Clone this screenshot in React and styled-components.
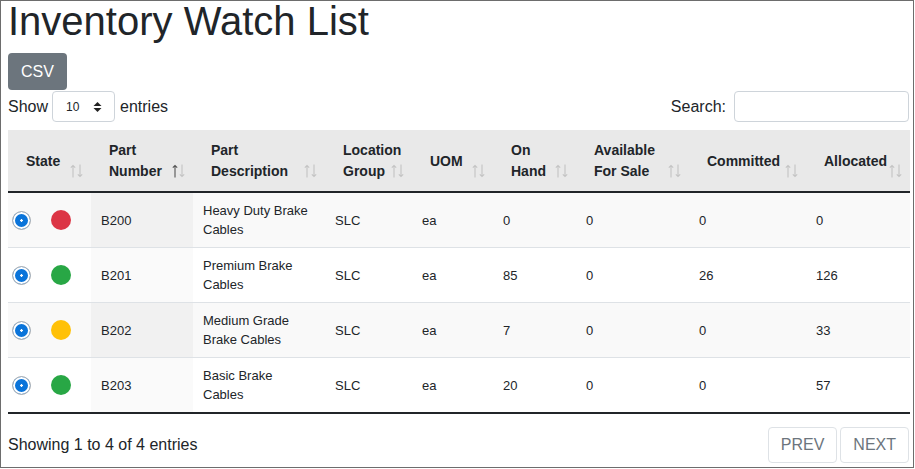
import React from "react";
import styled, { createGlobalStyle } from "styled-components";

const Global = createGlobalStyle`
  html, body { margin: 0; padding: 0; background: #fff; }
  body { font-family: "Liberation Sans", Arial, sans-serif; color: #212529; }
  * { box-sizing: border-box; }
`;

const Frame = styled.div`
  width: 914px;
  height: 468px;
  border: 1px solid #6d6d6d;
  padding: 0 3px 0 7px;
  display: flex;
  flex-direction: column;
`;

const Title = styled.h1`
  margin: 0;
  font-size: 40px;
  line-height: 40px;
  font-weight: 400;
  color: #212529;
`;

const CsvButton = styled.button`
  align-self: flex-start;
  margin-top: 12px;
  height: 37px;
  padding: 0 13px;
  border: none;
  border-radius: 4px;
  background: #6c757d;
  color: #fff;
  font-family: inherit;
  font-size: 16px;
`;

const Controls = styled.div`
  margin-top: 1px;
  display: flex;
  justify-content: space-between;
  align-items: center;
  height: 31px;
  font-size: 16px;
`;

const Group = styled.label`
  display: flex;
  align-items: center;
  gap: ${(p) => p.$gap || 4}px;
`;

const SelectBox = styled.div`
  width: 63px;
  height: 31px;
  border: 1px solid #ced4da;
  border-radius: 4px;
  display: flex;
  align-items: center;
  justify-content: space-between;
  padding: 0 12px 0 13px;
  font-size: 12px;
  margin-right: 1px;
`;

const SearchInput = styled.input`
  width: 175px;
  height: 31px;
  border: 1px solid #ced4da;
  border-radius: 4px;
  margin-right: 1px;
`;

const Table = styled.table`
  margin-top: 8px;
  width: 902px;
  table-layout: fixed;
  border-collapse: collapse;
  font-size: 13px;
  border-bottom: 2px solid #212529;
`;

const Th = styled.th`
  position: relative;
  height: 61px;
  padding: 10px 30px 9px 18px;
  background: #e9e9e9;
  text-align: left;
  vertical-align: middle;
  font-size: 14px;
  line-height: 21px;
  font-weight: 700;
  white-space: normal;
  border-bottom: 2px solid #212529;
`;

const SortMark = styled.svg`
  position: absolute;
  right: 8px;
  bottom: 13px;
`;

const Row = styled.tr`
  background: ${(p) => (p.$odd ? "#f9f9f9" : "#fff")};
  & + & { border-top: 1px solid #dee2e6; }
`;

const Td = styled.td`
  height: 54px;
  padding: 8px 14px 8px 10px;
  line-height: 19px;
  vertical-align: middle;
  background: ${(p) => (p.$sorted ? (p.$odd ? "#f1f1f1" : "#fafafa") : "transparent")};
`;

const StateCell = styled.td`
  padding: 0 0 0 4px;
  vertical-align: middle;
`;

const StateWrap = styled.div`
  display: flex;
  align-items: center;
  gap: 20px;
`;

const Radio = styled.span`
  width: 19px;
  height: 19px;
  border-radius: 50%;
  border: 1px solid #b5b5b5;
  box-shadow: inset 0 0 0 2px #fff;
  background: radial-gradient(circle, #fff 0 1px, #0a74da 1.5px);
  flex: none;
`;

const Dot = styled.span`
  width: 20px;
  height: 20px;
  border-radius: 50%;
  background: ${(p) => p.$color};
  flex: none;
`;

const Footer = styled.div`
  margin-top: 13px;
  display: flex;
  justify-content: space-between;
  align-items: center;
  font-size: 16px;
`;

const Pager = styled.div`
  display: flex;
  gap: 3px;
  margin-right: 1px;
`;

const PageButton = styled.button`
  height: 36px;
  padding: 0 12px;
  border: 1px solid #dee2e6;
  border-radius: 4px;
  background: #fff;
  color: #6c757d;
  font-family: inherit;
  font-size: 16px;
`;

const Arrows = ({ active }) => (
  <SortMark width="13" height="14" viewBox="0 0 13 14" fill="none" strokeWidth="1.1">
    <g stroke={active ? "#555" : "#c4c4c4"}>
      <path d="M3 1.5V13.5M0.8 3.7L3 1.5L5.2 3.7" />
    </g>
    <g stroke="#c4c4c4">
      <path d="M10 0.5V12.5M7.8 10.3L10 12.5L12.2 10.3" />
    </g>
  </SortMark>
);

const Caret = () => (
  <svg width="9" height="12" viewBox="0 0 9 12">
    <path d="M0.5 5L4.5 1L8.5 5Z" fill="#222" />
    <path d="M0.5 7L4.5 11L8.5 7Z" fill="#222" />
  </svg>
);

const columns = [
  { label: "State", w: 83 },
  { label: "Part Number", w: 102, active: true },
  { label: "Part Description", w: 132 },
  { label: "Location Group", w: 87 },
  { label: "UOM", w: 81 },
  { label: "On Hand", w: 83 },
  { label: "Available For Sale", w: 113 },
  { label: "Committed", w: 117 },
  { label: "Allocated", w: 104 },
];

const rows = [
  { color: "#dc3545", part: "B200", desc: "Heavy Duty Brake Cables", loc: "SLC", uom: "ea", hand: 0, avail: 0, comm: 0, alloc: 0 },
  { color: "#28a745", part: "B201", desc: "Premium Brake Cables", loc: "SLC", uom: "ea", hand: 85, avail: 0, comm: 26, alloc: 126 },
  { color: "#ffc107", part: "B202", desc: "Medium Grade Brake Cables", loc: "SLC", uom: "ea", hand: 7, avail: 0, comm: 0, alloc: 33 },
  { color: "#28a745", part: "B203", desc: "Basic Brake Cables", loc: "SLC", uom: "ea", hand: 20, avail: 0, comm: 0, alloc: 57 },
];

export default function App() {
  return (
    <>
      <Global />
      <Frame>
        <Title>Inventory Watch List</Title>
        <CsvButton>CSV</CsvButton>
        <Controls>
          <Group>
            Show
            <SelectBox>
              <span>10</span>
              <Caret />
            </SelectBox>
            entries
          </Group>
          <Group $gap={8}>
            Search:
            <SearchInput type="text" />
          </Group>
        </Controls>
        <Table>
          <colgroup>
            {columns.map((c) => (
              <col key={c.label} style={{ width: c.w }} />
            ))}
          </colgroup>
          <thead>
            <tr>
              {columns.map((c) => (
                <Th key={c.label}>
                  {c.label}
                  <Arrows active={c.active} />
                </Th>
              ))}
            </tr>
          </thead>
          <tbody>
            {rows.map((r, i) => {
              const odd = i % 2 === 0;
              return (
                <Row key={r.part} $odd={odd}>
                  <StateCell>
                    <StateWrap>
                      <Radio />
                      <Dot $color={r.color} />
                    </StateWrap>
                  </StateCell>
                  <Td $sorted $odd={odd}>{r.part}</Td>
                  <Td>{r.desc}</Td>
                  <Td>{r.loc}</Td>
                  <Td>{r.uom}</Td>
                  <Td>{r.hand}</Td>
                  <Td>{r.avail}</Td>
                  <Td>{r.comm}</Td>
                  <Td>{r.alloc}</Td>
                </Row>
              );
            })}
          </tbody>
        </Table>
        <Footer>
          <span>Showing 1 to 4 of 4 entries</span>
          <Pager>
            <PageButton>PREV</PageButton>
            <PageButton>NEXT</PageButton>
          </Pager>
        </Footer>
      </Frame>
    </>
  );
}
